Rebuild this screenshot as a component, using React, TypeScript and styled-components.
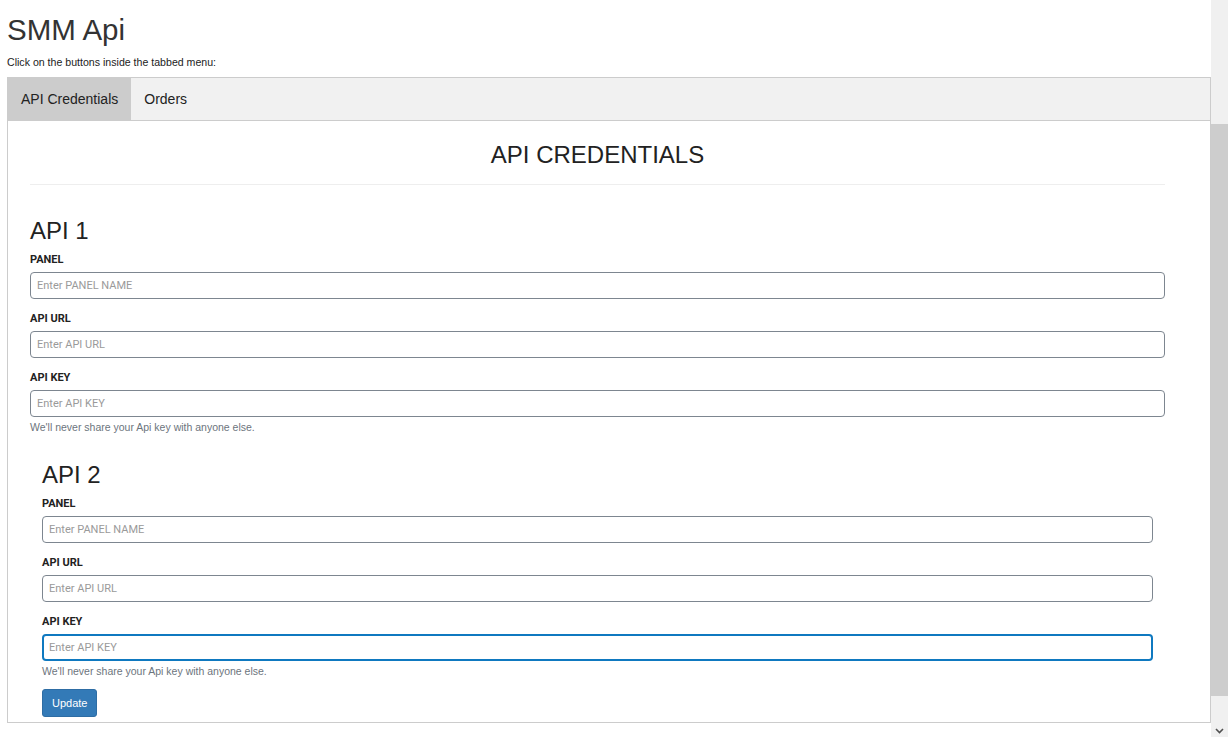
import React from 'react';
import styled, {createGlobalStyle} from 'styled-components';

const GlobalStyle = createGlobalStyle`
  html, body {
    margin: 0;
    padding: 0;
    height: 737px;
    overflow: hidden;
    background: #fff;
  }
  body {
    font-family: 'Liberation Sans', Arial, sans-serif;
    color: #333;
  }
  * {
    box-sizing: border-box;
  }
`;

const Page = styled.div`
  width: 1211px;
  padding-left: 7px;
`;

const Title = styled.h1`
  margin: 13px 0 0;
  font-size: 29.5px;
  line-height: 34px;
  font-weight: 400;
  color: #333;
`;

const Intro = styled.p`
  margin: 8px 0 8px;
  font-size: 10.6px;
  line-height: 14px;
  color: #222;
`;

const TabBar = styled.div`
  display: flex;
  height: 44px;
  border: 1px solid #ccc;
  background: #f1f1f1;
`;

const TabButton = styled.button<{active?: boolean}>`
  height: 42px;
  padding: 0 13px;
  border: none;
  background: ${({active}) => (active ? '#ccc' : 'transparent')};
  font-family: 'Liberation Sans', Arial, sans-serif;
  font-size: 14px;
  color: #222;
  cursor: pointer;
`;

const TabContent = styled.div`
  border: 1px solid #ccc;
  border-top: none;
  padding: 21px 0 5px 22px;
`;

const Inner = styled.div`
  width: 1135px;
`;

const SectionTitle = styled.h2`
  margin: 0;
  font-size: 24px;
  line-height: 26px;
  font-weight: 400;
  text-align: center;
  color: #222;
`;

const Rule = styled.hr`
  margin: 16px 0 0;
  border: none;
  border-top: 1px solid #eee;
`;

const ApiBlock = styled.div<{inset?: boolean}>`
  margin: ${({inset}) => (inset ? '28px 12px 0' : '33px 0 0')};
  display: flex;
  flex-direction: column;
  align-items: flex-start;
`;

const ApiTitle = styled.h3`
  margin: 0 0 8px;
  font-size: 24px;
  line-height: 26px;
  font-weight: 400;
  color: #222;
`;

const Group = styled.div`
  width: 100%;
  & + & {
    margin-top: 12px;
  }
`;

const Label = styled.label`
  display: block;
  margin-bottom: 4px;
  font-family: Roboto, 'Liberation Sans', sans-serif;
  font-size: 11px;
  line-height: 16px;
  font-weight: 700;
  color: #222;
`;

const Input = styled.input`
  display: block;
  width: 100%;
  height: 27px;
  padding: 0 6px;
  border: 1px solid #7d8690;
  border-radius: 4px;
  font-family: Roboto, 'Liberation Sans', sans-serif;
  font-size: 11px;
  color: #333;
  background: #fff;
  &::placeholder {
    color: #9a9a9a;
  }
  &:focus {
    outline: none;
    border: 2px solid #0f79c0;
    padding: 0 5px;
  }
`;

const Help = styled.small`
  display: block;
  margin-top: 3px;
  font-size: 10.5px;
  line-height: 14px;
  color: #6c757d;
`;

const UpdateButton = styled.button`
  margin-top: 11px;
  height: 28px;
  padding: 0 9px;
  border: 1px solid #2e6da4;
  border-radius: 3px;
  background: #337ab7;
  color: #fff;
  font-family: 'Liberation Sans', Arial, sans-serif;
  font-size: 11px;
`;

const ScrollTrack = styled.div`
  position: fixed;
  top: 0;
  right: 0;
  width: 17px;
  height: 737px;
  background: #f0f0f0;
`;

const ScrollThumb = styled.div`
  position: absolute;
  top: 124px;
  left: 0;
  width: 17px;
  height: 572px;
  background: #cdcdcd;
`;

const ScrollArrow = styled.svg`
  position: absolute;
  left: 4px;
  bottom: 3px;
`;

type FieldsProps = {focusLast?: boolean};

const ApiFields = ({focusLast}: FieldsProps) => (
  <>
    <Group>
      <Label>PANEL</Label>
      <Input placeholder="Enter PANEL NAME" />
    </Group>
    <Group>
      <Label>API URL</Label>
      <Input placeholder="Enter API URL" />
    </Group>
    <Group>
      <Label>API KEY</Label>
      <Input placeholder="Enter API KEY" autoFocus={focusLast} />
      <Help>We'll never share your Api key with anyone else.</Help>
    </Group>
  </>
);

export default function App() {
  return (
    <>
      <GlobalStyle />
      <Page>
        <Title>SMM Api</Title>
        <Intro>Click on the buttons inside the tabbed menu:</Intro>
        <TabBar>
          <TabButton active>API Credentials</TabButton>
          <TabButton>Orders</TabButton>
        </TabBar>
        <TabContent>
          <Inner>
            <SectionTitle>API CREDENTIALS</SectionTitle>
            <Rule />
            <ApiBlock>
              <ApiTitle>API 1</ApiTitle>
              <ApiFields />
            </ApiBlock>
            <ApiBlock inset>
              <ApiTitle>API 2</ApiTitle>
              <ApiFields focusLast />
              <UpdateButton>Update</UpdateButton>
            </ApiBlock>
          </Inner>
        </TabContent>
      </Page>
      <ScrollTrack>
        <ScrollThumb />
        <ScrollArrow width="9" height="6" viewBox="0 0 9 6">
          <path d="M1 1l3.5 3.5L8 1" fill="none" stroke="#505050" strokeWidth="1.6" />
        </ScrollArrow>
      </ScrollTrack>
    </>
  );
}
